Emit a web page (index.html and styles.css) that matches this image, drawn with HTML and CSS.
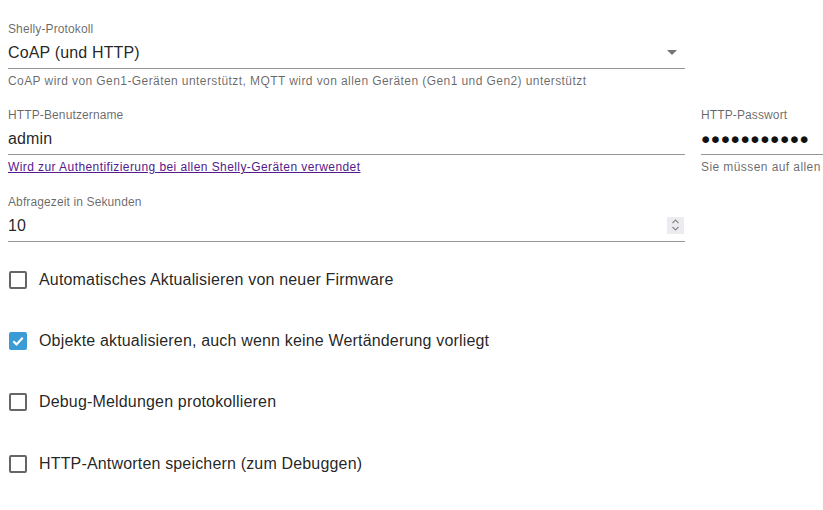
FILE: index.html
```html
<!DOCTYPE html>
<html lang="de">
<head>
<meta charset="utf-8">
<link rel="stylesheet" href="styles.css">
</head>
<body>
<div class="page">
  <div class="field full first">
    <div class="label">Shelly-Protokoll</div>
    <div class="control select">
      <span class="value">CoAP (und HTTP)</span>
      <svg class="caret" width="10" height="5" viewBox="0 0 10 5"><path d="M0 0h10L5 5z" fill="#757575"/></svg>
    </div>
    <div class="helper">CoAP wird von Gen1-Geräten unterstützt, MQTT wird von allen Geräten (Gen1 und Gen2) unterstützt</div>
  </div>

  <div class="row">
    <div class="field main">
      <div class="label">HTTP-Benutzername</div>
      <div class="control"><span class="value">admin</span></div>
      <div class="helper"><a class="link" href="#">Wird zur Authentifizierung bei allen Shelly-Geräten verwendet</a></div>
    </div>
    <div class="field side">
      <div class="label">HTTP-Passwort</div>
      <div class="control"><span class="value dots">●●●●●●●●●●●</span></div>
      <div class="helper nowrap">Sie müssen auf allen</div>
    </div>
  </div>

  <div class="field full last">
    <div class="label">Abfragezeit in Sekunden</div>
    <div class="control number">
      <span class="value">10</span>
      <span class="spin">
        <svg width="9" height="16" viewBox="0 0 9 16"><path d="M1.5 6 4.5 3 7.5 6M1.5 10 4.5 13 7.5 10" fill="none" stroke="#8a8a8a" stroke-width="1.2"/></svg>
      </span>
    </div>
  </div>

  <div class="checks">
    <label class="check"><span class="box"></span><span>Automatisches Aktualisieren von neuer Firmware</span></label>
    <label class="check"><span class="box on"><svg width="14" height="14" viewBox="0 0 14 14"><path d="M2.3 7.3 5.5 10.4 11.7 3.8" fill="none" stroke="#fff" stroke-width="2.2"/></svg></span><span>Objekte aktualisieren, auch wenn keine Wertänderung vorliegt</span></label>
    <label class="check"><span class="box"></span><span>Debug-Meldungen protokollieren</span></label>
    <label class="check"><span class="box"></span><span>HTTP-Antworten speichern (zum Debuggen)</span></label>
  </div>
</div>
</body>
</html>
```

FILE: styles.css
```css
* { box-sizing: border-box; }
html, body { margin: 0; padding: 0; background: #fff; }
body {
  font-family: "Liberation Sans", Arial, sans-serif;
  color: rgba(0,0,0,0.87);
  overflow: hidden;
  width: 823px;
  height: 510px;
}
.page {
  padding: 22px 0 0 8px;
  display: flex;
  flex-direction: column;
}
.field { display: flex; flex-direction: column; }
.full { width: 677px; }
.first { margin-bottom: 20px; }
.row { display: flex; gap: 16px; margin-bottom: 21px; overflow: hidden; }
.main { width: 677px; flex: none; }
.side { width: 122px; flex: none; }
.label {
  font-size: 12px;
  line-height: 14px;
  color: rgba(0,0,0,0.6);
  letter-spacing: 0.01em;
}
.control {
  display: flex;
  align-items: center;
  height: 33px;
  padding-top: 7px;
  padding-bottom: 7px;
  border-bottom: 1px solid #949494;
  font-size: 16px;
  line-height: 19px;
  letter-spacing: 0.15px;
}
.value { flex: 1; white-space: nowrap; }
.dots { font-size: 15.5px; letter-spacing: 0.5px; color: #111; }
.caret { margin-right: 8px; }
.spin {
  width: 17px;
  height: 17px;
  background: #ececf0;
  display: flex;
  align-items: center;
  justify-content: center;
  margin-right: 1px;
}
.helper {
  margin-top: 5px;
  font-size: 12px;
  line-height: 14px;
  color: rgba(0,0,0,0.6);
  letter-spacing: 0.42px;
}
.nowrap { white-space: nowrap; }
.link { color: #551a8b; text-decoration: underline; }
.checks { display: flex; flex-direction: column; margin-top: 7px; }
.check {
  display: flex;
  align-items: center;
  height: 61.3px;
  font-size: 16px;
  letter-spacing: 0.17px;
}
.box {
  width: 18px;
  height: 18px;
  border: 2px solid #666;
  border-radius: 2px;
  margin-left: 1px;
  margin-right: 12px;
  display: flex;
  align-items: center;
  justify-content: center;
}
.box.on { background: #3a9bd5; border-color: #3a9bd5; }
```
